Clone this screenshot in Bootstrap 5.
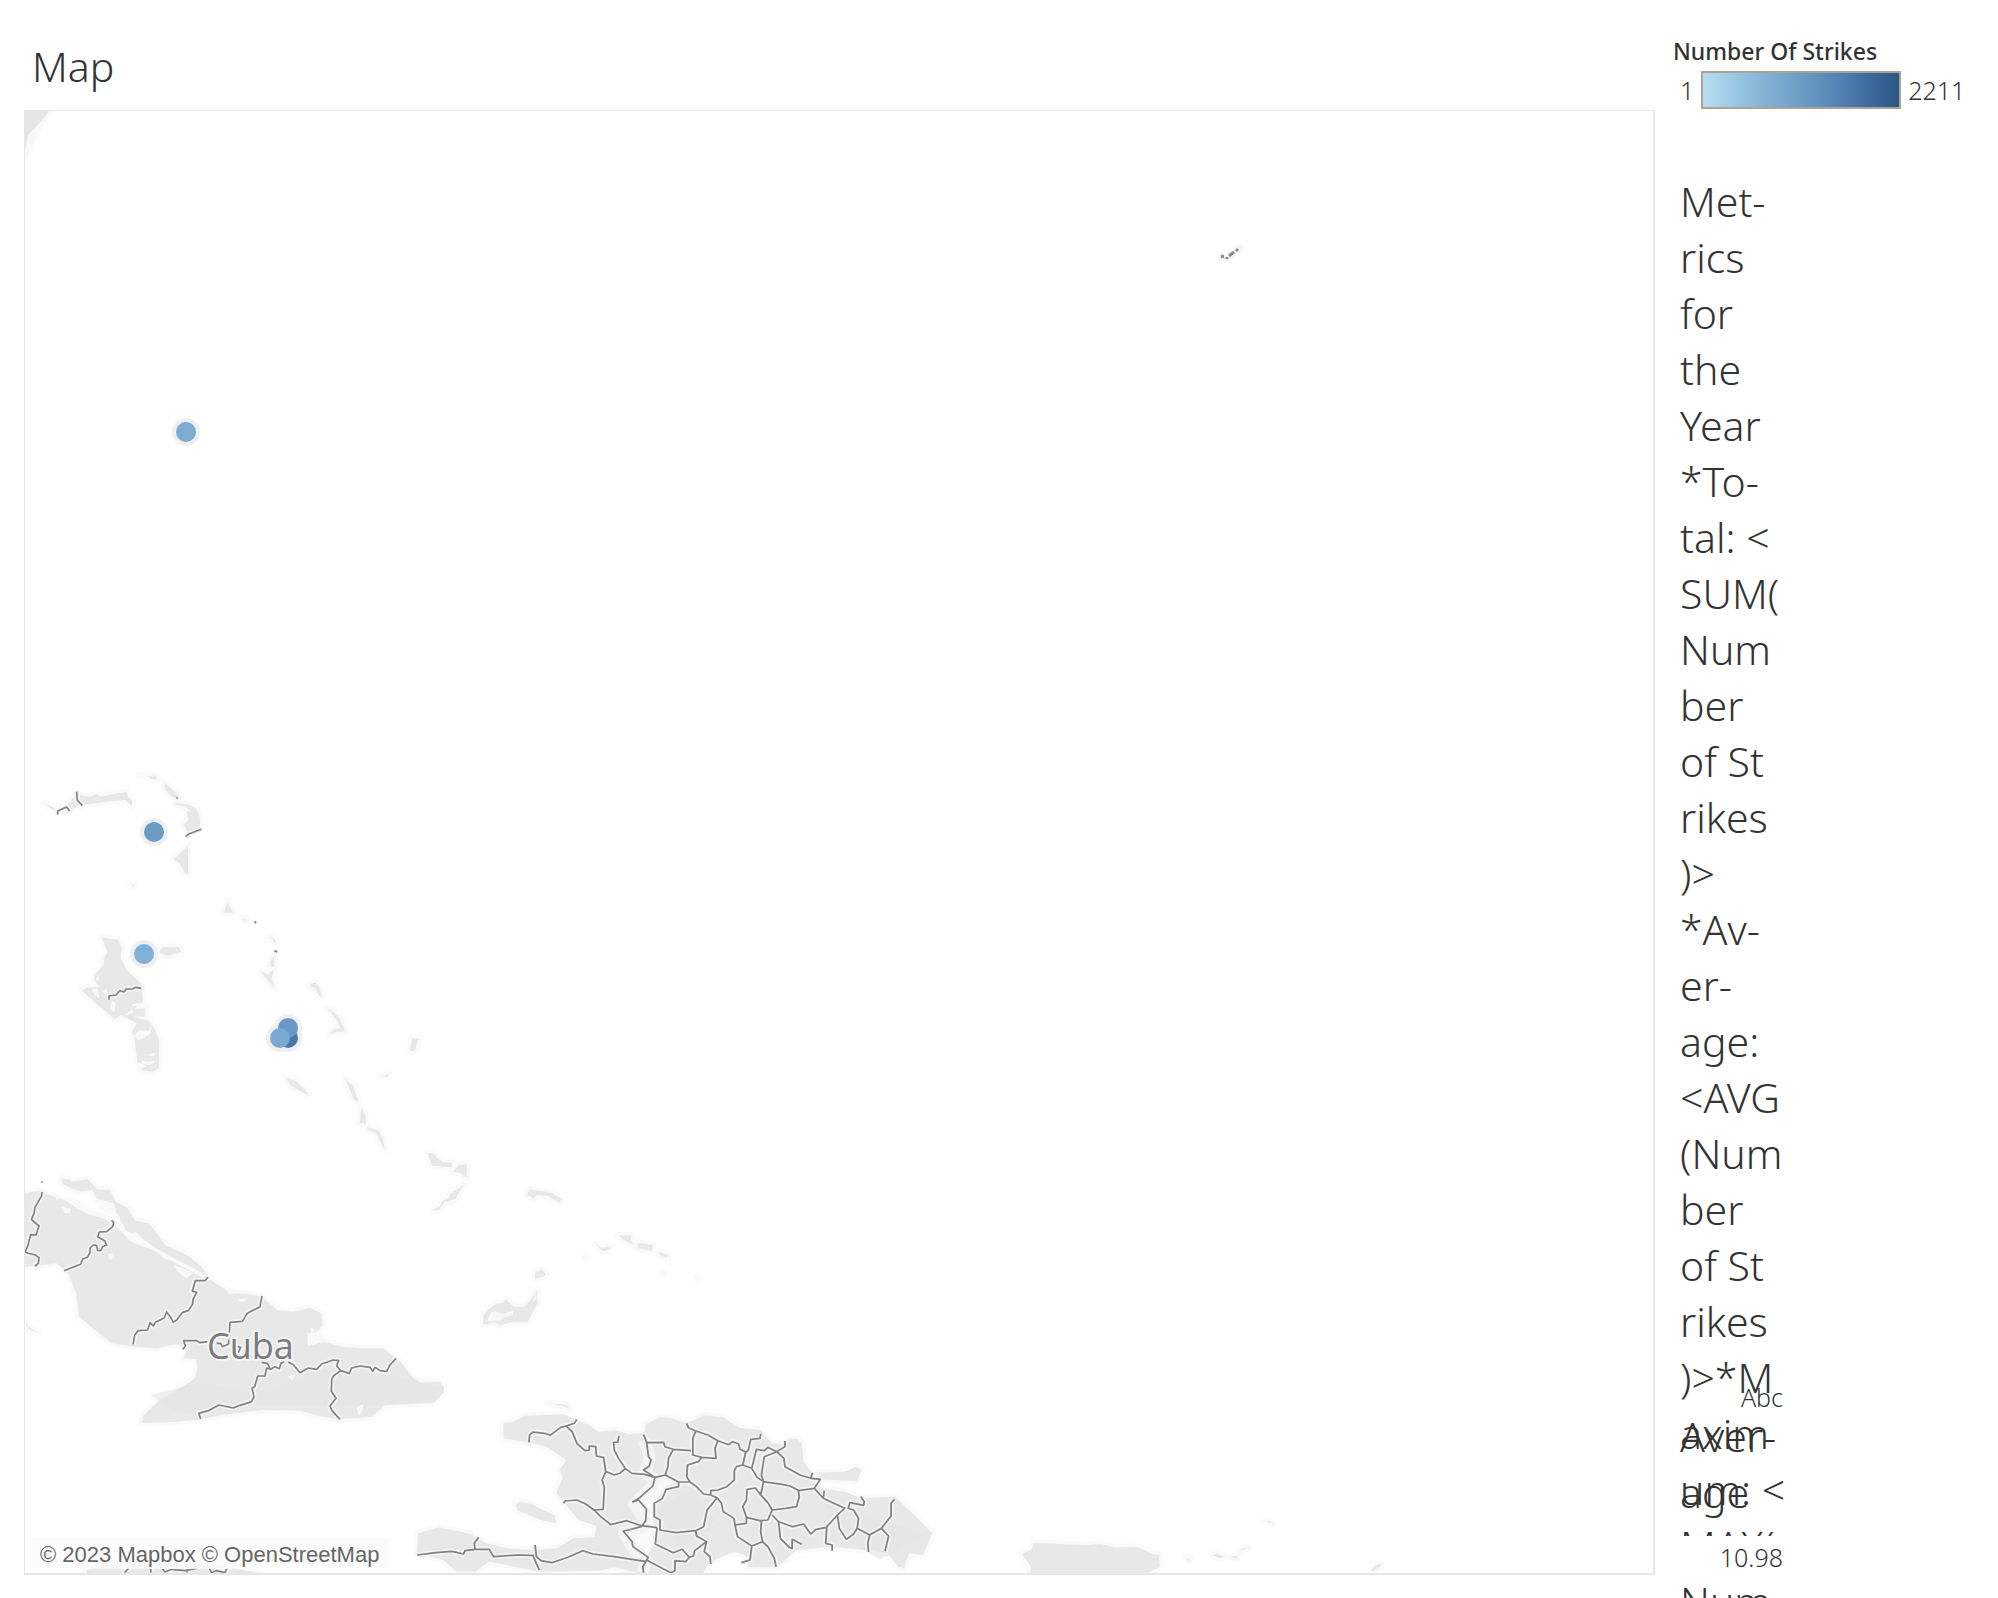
<!DOCTYPE html>
<html lang="en">
<head>
<meta charset="utf-8">
<meta name="viewport" content="width=device-width, initial-scale=1">
<title>Map</title>
<link rel="stylesheet" href="https://cdn.jsdelivr.net/npm/bootstrap@5.3.0/dist/css/bootstrap.min.css">
<style>
  body { font-family: "Noto Sans", "Open Sans", sans-serif; color: #333; background: #fff; }
  .dashboard { padding-left: 24px; }
  .sheet-title { font-size: 41px; font-weight: 300; line-height: 52px; padding: 40px 8px 18px; }
  .map-panel { border: 1px solid #e6e6e6; border-right-width: 2px; border-bottom-width: 2px; }
  .side { width: 343px; padding-left: 18px; }
  .legend { padding-top: 35px; }
  .legend-title { font-size: 23px; font-weight: 500; line-height: 32px; }
  .legend-scale { font-size: 25px; font-weight: 300; line-height: 38px; padding: 4px 0 0 7px; gap: 7px; }
  .ramp { width: 200px; height: 38px; border: 2px solid #aca393; background: linear-gradient(90deg, #b9ddf1, #98c6e4 17%, #7aaace 38%, #6193be 58%, #4977ab 76%, #2a5783); }
  .metrics { width: 110px; margin-top: 64px; padding-left: 7px; font-size: 41px; font-weight: 300; line-height: 56px; }
  .crosstab { left: 25px; top: 1383px; width: 103px; font-weight: 300; }
  .cell { font-size: 25px; line-height: 28px; height: 28px; }
  .row-label { font-size: 41px; line-height: 56px; height: 128px; margin-top: -3px; }
  .cell-box { height: 50px; padding-top: 7px; }
  .credit { left: 7px; bottom: 4px; padding: 3px 9px 0 8px; font: 22px/28px "Liberation Sans", Arial, sans-serif; background: rgba(250,250,250,.85); color: #666; }
  .credit a { color: inherit; text-decoration: none; }
  .land path { fill: #e8e8e8; stroke: #fafafa; stroke-width: 7px; paint-order: stroke; stroke-linejoin: round; vector-effect: non-scaling-stroke; }
  .hole path { fill: #f9f9f9; }
  .country { font-family: "Open Sans", "Noto Sans", sans-serif; font-size: 36px; font-weight: 500; fill: #7b7b7b; stroke: #f4f4f4; stroke-width: 4px; paint-order: stroke; }
</style>
</head>
<body class="overflow-hidden vh-100">
<div class="dashboard d-flex align-items-start">
  <main class="flex-grow-1">
    <h1 class="sheet-title m-0">Map</h1>
    <div class="map-panel position-relative overflow-hidden">
      <svg class="d-block w-100 h-auto" viewBox="25 111 1628 1462" role="img" aria-label="Map of lightning strikes near Cuba and the Bahamas">
        <path d="M20 105H54L38 135 25 163Z" fill="#f8f8f8"/>
        <path d="M20 105H54L42 120 28 135 25 151H20Z" fill="#e6e6e6"/>
        <g class="land">
          <g transform="translate(0 740) scale(.33333)">
            <path d="M135 190L150 204 168 213 160 203ZM172 213L195 198 215 180 230 160 248 168 270 170 290 163 305 170 335 163 380 156 384 170 398 182 394 199 378 180 340 182 290 190 245 196 215 208Z"/>
            <path d="M418 105L430 108ZM444 108L468 109 472 117 450 117ZM492 128L530 158 534 176 512 168 497 150ZM526 188L560 192 590 206 600 235 600 266 580 272 562 284 558 262 549 255 565 240 560 212 575 216 552 198 528 194Z"/>
            <path d="M564 318V402H555L540 370 520 358ZM392 431L405 437 399 441ZM682 485L700 519H671ZM728 533L740 541 732 541ZM479 632L488 622 535 620 544 635 502 647 479 640Z"/>
            <path d="M305 592L355 600 366 625 362 652 380 690 425 733 429 786 402 806 436 805 436 828 400 830 446 842 466 870 478 905 476 985 458 996 420 989 440 978 412 965 404 900 396 874 410 850 362 825 346 838 320 817 290 792 246 752 262 742 300 740 282 720 284 704 310 676 315 648 322 636Z"/>
            <path d="M808 588L826 598 828 612ZM824 648L822 680 812 682 810 664ZM780 694L803 702 822 690 815 715 824 744 803 720ZM932 733L945 728 958 740 965 773 955 765 946 742 930 742ZM984 805L1015 828 1036 875 1010 875 988 885 1000 868 1020 864 1012 844ZM1237 893L1256 896 1244 934 1230 932ZM1145 1010L1166 1003 1164 1011Z"/>
            <path d="M858 1014L888 1023 925 1060 915 1062 870 1035ZM1036 1017L1058 1036 1077 1085 1062 1079 1047 1045ZM1083 1105L1096 1125 1098 1153 1080 1148ZM1101 1160L1138 1173 1150 1200 1154 1230 1140 1205 1130 1180 1102 1170Z"/>
          </g>
          <g transform="translate(0 1130) scale(.33333)">
            <path d="M60 190L115 184 175 204 225 218 262 246 316 262 365 300 390 332 440 348 495 372 545 402 600 420 640 455 690 488 745 492 785 500 832 540 880 545 930 533 965 550 968 585 950 607 922 610 924 648 970 635 1030 650 1085 655 1150 655 1205 700 1240 745 1265 758 1318 754 1332 768 1332 787 1302 818 1155 826 1115 860 1020 868 975 862 900 842 790 840 700 850 600 868 522 876 425 879 430 856 480 810 545 772 585 745 592 710 588 688 550 685 566 655 530 643 470 655 400 650 335 640 285 600 237 560 228 490 205 430 170 400 110 408 60 412Z"/>
            <path d="M184 145L205 148 215 155 265 148 290 178 330 180 348 215 385 236 405 272 448 280 482 325 495 345 560 375 605 410 625 440 580 415 520 385 470 355 432 330 408 305 398 312 378 302 355 255 325 215 290 208 278 180 240 184 215 175 188 162Z"/>
            <path d="M75 580L92 595 114 606 88 600ZM260 1320L350 1300 420 1296 560 1305 660 1308 780 1330V1340H260Z"/>
          </g>
          <g transform="translate(400 1130) scale(.35714 .33333)">
            <path d="M76 68L90 70 120 97 145 98 145 112 90 107ZM188 102L186 143 173 131 147 125 165 105ZM178 165L155 207 125 217 110 240 90 242 110 230 120 212 138 204 140 192ZM362 177L395 183 425 188 453 208 446 218 415 198 385 195 374 205 356 195ZM610 317L647 315 648 330 655 345 635 335ZM665 338L708 345 706 364 665 354ZM725 366L750 374 748 384 727 374ZM547 343L565 354 590 350 584 360 568 364ZM395 418L409 433 400 441 378 446 380 427ZM736 428L742 428 741 432ZM830 440L832 445ZM518 382L521 384Z"/>
            <path d="M232 562L245 540 268 522 285 520 297 509 318 530 348 530 366 510 384 480 386 518 356 577 320 575 280 586 264 578 234 584Z"/>
            <path d="M413 820L465 824 476 836 450 826ZM324 1125L335 1115 365 1121 435 1158 437 1180 400 1172 330 1142ZM1165 1028L1245 1025 1278 1010 1292 1022 1280 1054 1180 1048Z"/>
            <path d="M290 880L315 876 350 858 455 852 495 870 530 885 555 905 600 900 640 912 685 910 685 886 725 862 760 864 800 880 855 856 905 862 950 893 1010 900 1040 940 1080 945 1090 924 1115 928 1126 945 1130 995 1155 1030 1175 1075 1245 1085 1290 1105 1385 1100 1440 1155 1490 1210 1465 1275 1425 1270 1412 1315 1395 1310 1365 1270 1300 1260 1210 1250 1110 1260 1085 1285 1055 1312 975 1312 975 1280 940 1265 900 1280 865 1300 845 1335 690 1335 600 1312 560 1322 390 1325 250 1295 210 1325 160 1325 120 1290 48 1270 50 1210 110 1192 200 1212 240 1240 300 1255 380 1260 440 1255 485 1225 545 1222 550 1188 500 1170 465 1125 438 1090 455 1045 448 1018 465 990 410 950 350 935 290 925Z"/>
          </g>
          <g transform="translate(940 1400) scale(.33333)">
            <path d="M280 429L445 436 480 432 525 442 590 440 640 463 658 464V492L660 500 625 518H270L273 502 247 463 275 448ZM738 474L750 475 747 483ZM976 364L990 364 996 371ZM818 466L835 461 852 470 838 475ZM872 472L894 465 890 476ZM900 452L908 445 924 445ZM1292 512L1308 495 1323 492 1322 499 1300 514Z"/>
          </g>
        </g>
        <g fill="#e3e3e3" opacity=".55">
          <path d="M150 1395L200 1383 265 1392 320 1370 380 1372 443 1388 435 1402 360 1406 250 1405 180 1415Z"/>
          <path d="M655 1510L690 1490 720 1525 680 1545ZM820 1500L880 1520 925 1535 880 1560 850 1540Z"/>
        </g>
        <g class="hole">
          <g transform="translate(0 740) scale(.33333)"><path d="M292 706L298 718 288 722ZM275 750L292 745 298 775 285 765ZM304 752L322 748 318 766ZM335 782L348 790 342 818 330 806ZM398 792L428 788 418 796 395 800ZM375 825L402 820 396 808ZM402 888L420 870 446 872 455 862 452 880 432 895 415 900ZM440 945L468 938 460 948ZM425 962L440 965 470 962 450 975 428 972Z"/></g>
          <g transform="translate(0 1130) scale(.33333)"><path d="M184 230L212 236 210 250 195 250ZM324 372L342 370 334 390 326 388ZM520 405L555 418 578 430 560 445 540 432ZM714 508L740 504 735 515 718 514ZM680 485L705 490 690 494ZM865 738L885 733 878 752ZM1070 830L1092 822 1086 845 1076 858ZM935 590L944 602 932 612ZM925 610L960 608 985 635 950 640 925 648ZM170 195L225 218 262 240 316 255 365 298 390 328 440 344 495 370 520 390 495 388 470 362 430 350 395 335 360 300 318 268 262 252 225 230 190 208 180 200 168 212ZM296 215L340 218 350 240 330 255 300 238Z"/></g>
          <g transform="translate(400 1130) scale(.35714 .33333)"><path d="M245 572L255 545 270 545 290 552 318 542 316 556 290 562 280 572ZM372 515L380 490 382 505ZM714 1042L780 1052 740 1075 715 1110 708 1190 690 1190 690 1138 670 1110 708 1068ZM630 1203L675 1190 712 1195 708 1250 690 1275 655 1245Z"/></g>
        </g>
        <path d="M644 1440L650 1458 645 1472 655 1480 651 1488 638 1500 634 1504 645 1520 642 1528 624 1532 634 1550 647 1560 642 1573" fill="none" stroke="#f4f4f4" stroke-width="12" stroke-linejoin="round"/>
        <defs>
          <g id="lines">
            <g transform="translate(0 740) scale(.33333)">
              <path d="M173 224V213L200 201 209 213M230 155L232 181 247 196M557 290L568 281 604 268M327 779V768L348 765 359 752 372 756 378 747 396 747 408 742 424 745M530 172L533 176M764 550L768 544M823 632L832 636"/>
            </g>
            <g transform="translate(0 1130) scale(.33333)">
              <path d="M125 154L127 158M126 186L125 197 105 232 102 250 94 268 117 288 108 315 92 314 84 345 75 367 106 375 117 383 115 400 105 408M335 271L341 278 338 290 320 305 298 306 293 320 314 332 320 345 308 350 302 362 293 361 290 347 280 345 270 354 270 368 262 382 248 387 242 403 192 422M624 441L615 452 586 452 577 483 590 487 579 508 578 522 565 542 548 547 530 570 520 577 512 562 500 546 492 564 476 572 466 577 460 588 450 578 443 600 414 602 404 616 399 643M786 498L780 530 742 550 727 574 690 577 688 612M548 658L556 648 551 632H590L600 638 622 635M650 640L662 640 667 650 686 642 686 625M712 650L722 652 715 668M750 675L752 680M785 697L802 700 812 718 800 714 795 738 773 738 764 770 756 775 762 800 755 815 720 826 700 834 657 825 625 842 596 850 602 867M812 718L825 710 838 716 843 700 852 695M865 696L880 704 900 728 925 714 950 718 965 702 1000 690 1016 692 1010 707 1022 722 1000 738 995 750 994 784 1008 805 990 828 996 842 1020 868M1022 722L1048 730 1055 714 1080 708 1110 712 1118 724 1125 712 1140 722 1160 724 1170 705 1188 685M374 1328L388 1312M451 1312L453 1328M484 1312L495 1326 515 1318 555 1322 592 1315M560 1320L562 1328M628 1315L635 1328 648 1322 675 1328 682 1312"/>
            </g>
            <g transform="translate(400 1130) scale(.35714 .33333)">
              <path d="M495 868L488 880 465 888 450 892 420 916 405 910 372 906 363 915 361 937M465 888L482 905 495 940 518 962 530 960 530 948 548 950 550 978 570 982 576 1025 566 1050 572 1072 569 1138 543 1140M613 918L610 936 598 937 600 960 612 985 631 1016 615 1030 600 1035 578 1025M631 1016L650 1030 685 1033 714 1042M682 914L690 935 696 980 703 990 698 1008 682 1020 714 1042 708 1068 672 1102 652 1116 668 1110 690 1138 688 1172 675 1190 640 1200 625 1203 650 1235 652 1250 695 1282 680 1310 682 1328M458 1120L462 1113 495 1110 520 1122 543 1140 562 1160 590 1184 635 1172 672 1186 720 1193M690 938L738 937 742 950 765 958 815 962M765 958L752 985 750 1010 743 1035 714 1042M743 1035L780 1056 812 1056M802 880L808 893 828 903 820 925 820 975 845 982 885 985 882 955 890 932 862 915 828 903M890 932L920 944 932 935 948 942 952 958 968 966 960 1005 942 1010 936 1022 936 1050 915 1070 890 1080 870 1082 870 1095 850 1092 830 1070 812 1056 803 1040 805 1005 835 995 845 982M1010 912L1008 925 982 928 975 962 968 966M960 1005L985 1015 998 958 1020 962 1030 952 1055 965 1078 950V933M985 1015L1000 1042 1018 1055 1012 1035 1020 980 1055 965 1075 985 1078 1010 1120 1035 1150 1045 1155 1028M1150 1045L1177 1048 1160 1075 1115 1082 1118 1100 1110 1130 1080 1135 1042 1140M1018 1055L1070 1063 1092 1068 1118 1082M1018 1055L1010 1095 1030 1118 1042 1140 1030 1170 1008 1172 970 1162 960 1130 970 1110 972 1078 995 1074 1010 1095M1160 1075L1185 1105 1188 1082M1185 1105L1245 1135 1225 1155 1195 1190 1192 1240 1210 1245V1262M1225 1155L1230 1195 1250 1228 1270 1212 1280 1195 1284 1165 1270 1140 1255 1135 1260 1118 1298 1126 1300 1115 1290 1100M1280 1195L1315 1215 1310 1240 1312 1266M1315 1215L1348 1195 1375 1158V1120L1385 1108M1348 1195L1368 1218 1358 1264M870 1095L888 1103 860 1140 850 1190 828 1202 772 1208 728 1200 728 1170 712 1160 712 1120 735 1105 745 1078 780 1070 780 1056M888 1103L900 1120 905 1145 935 1165 938 1185 970 1180 970 1162M938 1185L945 1220 985 1248 1015 1235 1010 1205 1012 1172M985 1248L980 1290 956 1298M1015 1235L1030 1250 1048 1285 1053 1310M1042 1155L1060 1175 1065 1225 1090 1252 1098 1256 1098 1228 1125 1243M1060 1175L1100 1190 1130 1182 1150 1212 1165 1198 1195 1192M720 1193L715 1242 765 1268 790 1258 810 1282 822 1278 825 1262 858 1235 830 1218 828 1202M858 1235L852 1265 868 1280 870 1302M810 1282L800 1295 770 1292 770 1322 758 1328 690 1290M48 1275L100 1268 145 1264 178 1272 182 1262 210 1258 250 1258 262 1280 330 1275 372 1276 390 1320M210 1258L208 1240 220 1222M378 1245L382 1280 395 1292 425 1298 470 1282 512 1262 540 1272 600 1280 690 1295"/>
            </g>
          </g>
        </defs>
        <use href="#lines" fill="none" stroke="#f3f3f3" stroke-width="16" stroke-linejoin="round"/>
        <use href="#lines" fill="none" stroke="#828282" stroke-width="5" stroke-linejoin="round"/>
        <path d="M1220 258L1228 258 1240 248" fill="none" stroke="#f7f7f7" stroke-width="8" stroke-linecap="round"/>
        <path d="M1221 257L1224 256M1227 257V259M1229 256L1234 252M1236 251L1238 249" fill="none" stroke="#8b8b8b" stroke-width="3"/>
        <text class="country" x="207" y="1359">Cuba</text>
        <g fill="#efefef"><circle cx="186" cy="432" r="14"/><circle cx="154" cy="832" r="14"/><circle cx="144" cy="954" r="14"/><circle cx="288" cy="1028" r="14"/><circle cx="288" cy="1038" r="14"/><circle cx="280" cy="1038" r="14"/></g>
        <circle cx="186" cy="432" r="10" fill="#7cacd2"/>
        <circle cx="154" cy="832" r="10" fill="#6a9cc6"/>
        <circle cx="144" cy="954" r="10" fill="#82b1d7"/>
        <circle cx="288" cy="1038" r="10" fill="#4878ab"/>
        <circle cx="288" cy="1028" r="10" fill="#6899c4"/>
        <circle cx="280" cy="1038" r="10" fill="#7aaad0"/>
      </svg>
      <div class="credit position-absolute text-nowrap"><a href="#mapbox">© 2023 Mapbox</a> <a href="#osm">© OpenStreetMap</a></div>
    </div>
  </main>
  <aside class="side flex-shrink-0 position-relative">
    <section class="legend">
      <div class="legend-title">Number Of Strikes</div>
      <div class="legend-scale d-flex"><span>1</span><div class="ramp"></div><span>2211</span></div>
    </section>
    <div class="metrics text-nowrap">Met-<br>rics<br>for<br>the<br>Year<br>*To-<br>tal: &lt;<br>SUM(<br>Num<br>ber<br>of St<br>rikes<br>)&gt;<br>*Av-<br>er-<br>age:<br>&lt;AVG<br>(Num<br>ber<br>of St<br>rikes<br>)&gt;*M<br>axim<br>um: &lt;<br>MAX(<br>Num</div>
    <section class="crosstab position-absolute">
      <div class="cell text-end">Abc</div>
      <div class="row-label">Aver-<br>age</div>
      <div class="cell cell-box bg-white text-end">10.98</div>
    </section>
  </aside>
</div>
<script src="https://cdn.jsdelivr.net/npm/bootstrap@5.3.0/dist/js/bootstrap.bundle.min.js"></script>
</body>
</html>
